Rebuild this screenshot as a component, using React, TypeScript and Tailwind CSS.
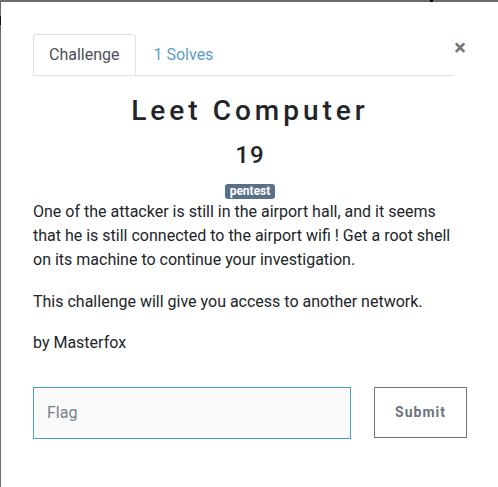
import React from "react";

export default function App() {
  return (
    <div
      className="relative w-[498px] h-[487px] bg-white overflow-hidden text-[#212529]"
      style={{ fontFamily: "Roboto, 'Liberation Sans', sans-serif" }}
    >
      <div className="absolute left-0 top-0 w-full h-[2px] bg-[#6b6b6b]" />
      <div className="absolute left-0 top-0 w-px h-full bg-[#6b6b6b]" />
      <div className="absolute left-[430px] top-0 w-[3px] h-[2px] bg-black" />
      <div className="absolute left-0 top-[16px] w-px h-[9px] bg-[#111]" />
      <div className="pl-[33px] pr-[31px] pt-[34px]">
        <div className="flex items-start">
          <div className="flex-1 flex border-b border-[#dee2e6]">
            <div className="h-[41px] px-[15px] flex items-center border border-[#dee2e6] border-b-white rounded-t-[4px] -mb-px bg-white text-[16px] text-[#495057]">
              Challenge
            </div>
            <div className="h-[41px] px-[18px] flex items-center text-[16px] text-[#5b9dc9]">
              1 Solves
            </div>
          </div>
          <div className="text-[#777] text-[22px] font-bold leading-none mt-[3px] mr-[1px]">×</div>
        </div>

        <h2 className="mt-[18px] text-center text-[28px] font-medium tracking-[4px] leading-[34px]">
          Leet Computer
        </h2>
        <h3 className="mt-[13px] text-center text-[24px] font-medium tracking-[1px] leading-[28px]">
          19
        </h3>
        <div className="mt-[15px] flex justify-center">
          <span className="bg-[#5a6f88] text-white text-[12px] font-bold leading-[15px] px-[5px] rounded-[3px]">
            pentest
          </span>
        </div>
        <div className="mt-[1px] text-[16px] leading-[24px] pr-[2px]">
          <p>
            One of the attacker is still in the airport hall, and it seems that he is still connected to the airport wifi ! Get a root shell on its machine to continue your investigation.
          </p>
          <p className="mt-[18px]">This challenge will give you access to another network.</p>
          <p className="mt-[17px]">by Masterfox</p>
        </div>
        <div className="mt-[32px] flex items-start">
          <div className="w-[318px] h-[52px] border border-[#4d9bc7] bg-[#fafafa] flex items-center pl-[13px] text-[16px] text-[#7a8087]">
            Flag
          </div>
          <div className="ml-[23px] w-[93px] h-[51px] border border-[#6c757d] flex items-center justify-center text-[14px] font-bold text-[#6c757d] tracking-[1px]">
            Submit
          </div>
        </div>
      </div>
    </div>
  );
}
